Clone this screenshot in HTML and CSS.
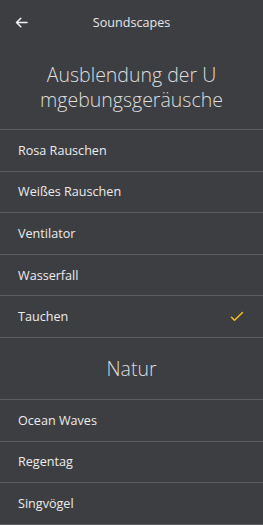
FILE: index.html
```html
<!DOCTYPE html>
<html lang="de">
<head>
<meta charset="utf-8">
<link rel="stylesheet" href="styles.css">
</head>
<body>
<div class="screen">
  <header class="topbar">
    <span class="back">
      <svg width="13" height="11" viewBox="0 0 13 11"><path d="M12 5.5H1.5M5.8 1.2L1.5 5.5l4.3 4.3" fill="none" stroke="#f2f2f2" stroke-width="1.5" stroke-linecap="round" stroke-linejoin="round"/></svg>
    </span>
    <span class="topbar-title">Soundscapes</span>
  </header>
  <h1 class="section-title first">Ausblendung der U<br>mgebungsgeräusche</h1>
  <ul class="list">
    <li class="row">Rosa Rauschen</li>
    <li class="row">Weißes Rauschen</li>
    <li class="row">Ventilator</li>
    <li class="row">Wasserfall</li>
    <li class="row selected">Tauchen
      <svg class="check" width="14" height="11" viewBox="0 0 14 11"><path d="M1.5 6.2l3 3L12.5 1.5" fill="none" stroke="#f4c21b" stroke-width="1.5" stroke-linecap="round" stroke-linejoin="round"/></svg>
    </li>
  </ul>
  <h2 class="section-title nature">Natur</h2>
  <ul class="list">
    <li class="row">Ocean Waves</li>
    <li class="row">Regentag</li>
    <li class="row last">Singvögel</li>
  </ul>
</div>
</body>
</html>
```
FILE: styles.css
```css
html, body {
  margin: 0;
  padding: 0;
  background: #3d3e42;
}
body {
  font-family: "Open Sans", "Noto Sans", sans-serif;
  color: #ececec;
  width: 263px;
  height: 525px;
  overflow: hidden;
}
.screen {
  display: flex;
  flex-direction: column;
}
.topbar {
  height: 44px;
  display: flex;
  align-items: center;
  justify-content: center;
  position: relative;
}
.back {
  position: absolute;
  left: 15px;
  top: 17px;
  display: flex;
}
.topbar-title {
  font-size: 12.6px;
  color: #e6e6e6;
}
.section-title {
  margin: 0;
  font-weight: 300;
  text-align: center;
  color: #dedede;
  font-size: 19.5px;
  line-height: 25px;
}
.section-title.first {
  padding: 18px 0 17px;
}
.section-title.nature {
  padding: 18px 0 18px;
  border-top: 1px solid #5c5d61;
}
.list {
  list-style: none;
  margin: 0;
  padding: 0;
}
.row {
  height: 40.6px;
  border-top: 1px solid #5c5d61;
  display: flex;
  align-items: center;
  justify-content: space-between;
  padding: 0 19px 0 18px;
  font-size: 12.6px;
  color: #ececec;
}
.row.last {
  border-bottom: 1px solid #5c5d61;
}
.check {
  display: block;
}
```
